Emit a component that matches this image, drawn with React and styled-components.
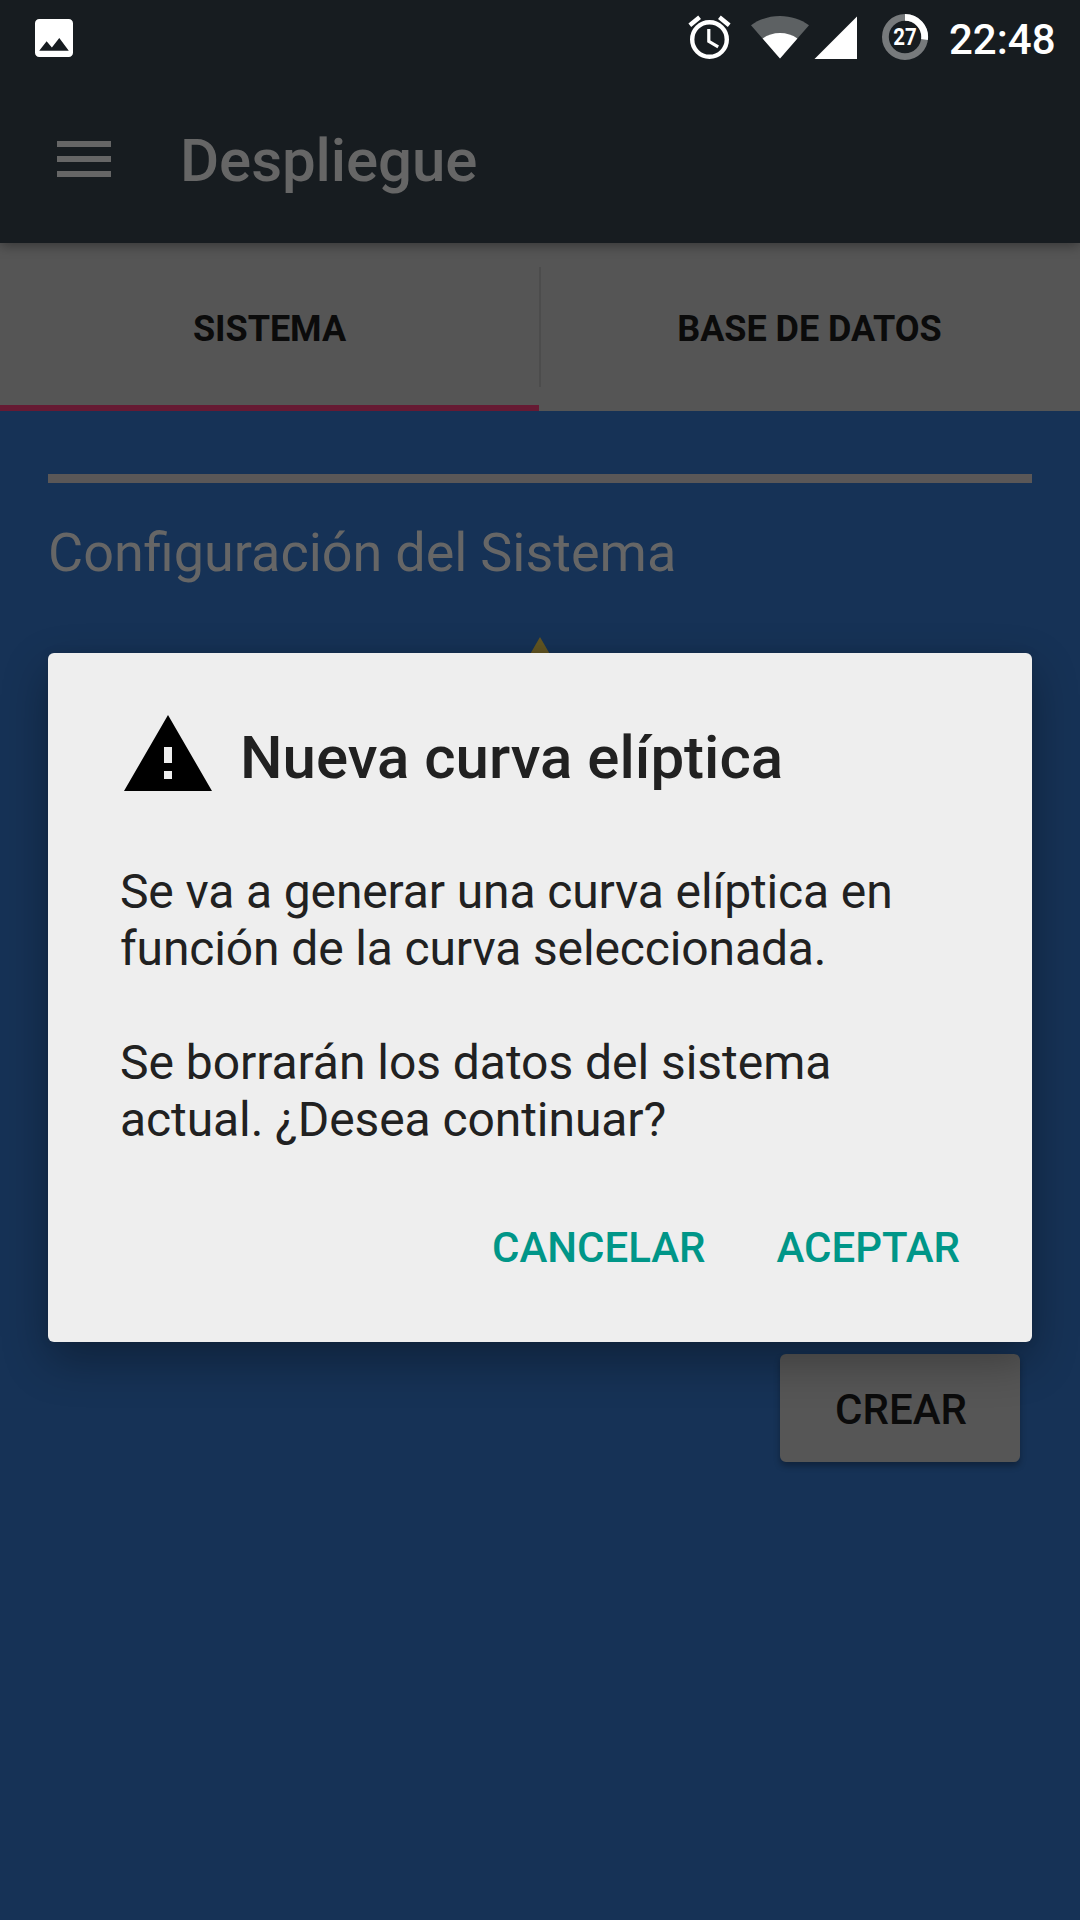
import React from "react";
import styled, { createGlobalStyle } from "styled-components";

const GlobalStyle = createGlobalStyle`
  *, *::before, *::after { box-sizing: border-box; }
  html, body { margin: 0; padding: 0; background: #163256; }
  body { font-family: Roboto, "Noto Sans", sans-serif; }
  button { font-family: inherit; border: 0; margin: 0; padding: 0; background: none; }
  h1, h2, p { margin: 0; }
`;

const Screen = styled.div`
  position: relative;
  display: flex;
  flex-direction: column;
  width: 1080px;
  height: 1920px;
  overflow: hidden;
  background: #163256;
`;

const Header = styled.header`
  position: relative;
  z-index: 1;
  height: 243px;
  background: #171c20;
  box-shadow: 0 3px 11px rgba(0, 0, 0, 0.34);
`;

const StatusBar = styled.div`
  display: flex;
  justify-content: space-between;
  height: 72px;
  padding: 0 24px 0 28px;
  color: #fff;
`;

const StatusGroup = styled.div`
  display: flex;
  align-items: flex-start;
`;

const StatusIcon = styled.svg`
  display: block;
  flex: none;
  width: ${(p) => p.$w}px;
  height: 72px;
  margin-left: ${(p) => p.$gap || 0}px;
`;

const Clock = styled.span`
  width: 107px;
  margin-left: 20px;
  padding-top: 15px;
  font-size: 42px;
  font-weight: 500;
  line-height: 49px;
  white-space: nowrap;
`;

const Toolbar = styled.div`
  display: flex;
  align-items: center;
  height: 171px;
  padding: 0 57px 5px;
  gap: 69px;
  color: #666;
`;

const MenuButton = styled.button`
  display: flex;
  flex-direction: column;
  gap: 9px;
  width: 54px;
  margin-top: 8px;
`;

const MenuLine = styled.span`
  display: block;
  width: 100%;
  height: 6px;
  background: #666;
`;

const Title = styled.h1`
  font-size: 60px;
  font-weight: 500;
  letter-spacing: -0.08px;
  line-height: 70px;
  padding-top: 12px;
`;

const Tabs = styled.nav`
  display: grid;
  grid-template-columns: 539px 2px 539px;
  align-items: stretch;
  height: 168px;
  background: #555;
`;

const Tab = styled.button`
  display: flex;
  align-items: center;
  justify-content: center;
  padding: ${(p) => (p.$active ? "10px 0 0" : "4px 2px 0 0")};
  border-bottom: ${(p) => (p.$active ? "6px solid #661a33" : "0")};
  color: #0b0b0b;
  font-size: 36px;
  font-weight: 700;
  letter-spacing: -0.04px;
  line-height: 42px;
`;

const TabDivider = styled.span`
  height: 120px;
  margin-top: 24px;
  background: #4c4c4c;
`;

const Content = styled.main`
  display: flex;
  flex-direction: column;
  flex: 1;
  padding: 63px 48px 0;
`;

const Rule = styled.div`
  height: 9px;
  background: #5a5757;
`;

const Heading = styled.h2`
  margin-top: 38px;
  color: #666;
  font-size: 54px;
  font-weight: 400;
  word-spacing: -0.6px;
  line-height: 64px;
`;

const Notice = styled.svg`
  display: block;
  align-self: center;
  width: 96px;
  height: 96px;
  margin-top: 44px;
`;

const CreateButton = styled.button`
  align-self: flex-end;
  width: 240px;
  height: 108px;
  margin: 629px 12px 0 0;
  padding: 2px 0 0 2px;
  border-radius: 6px;
  background: #565656;
  box-shadow: 0 4px 6px rgba(0, 0, 0, 0.3);
  color: #0b0b0b;
  font-size: 42px;
  font-weight: 500;
  line-height: 49px;
`;

const Overlay = styled.div`
  position: absolute;
  z-index: 2;
  inset: 72px 0 0;
  display: flex;
  align-items: center;
  padding: 3px 48px 0;
`;

const Dialog = styled.section`
  display: flex;
  flex-direction: column;
  width: 100%;
  height: 689px;
  padding: 54px 72px 0;
  border-radius: 6px;
  background: #eee;
  color: #212121;
  box-shadow: 0 18px 46px rgba(0, 0, 0, 0.32), 0 0 10px rgba(0, 0, 0, 0.1);
`;

const DialogHeader = styled.div`
  display: flex;
  align-items: center;
  gap: 24px;
  height: 96px;
`;

const WarningIcon = styled.svg`
  display: block;
  width: 96px;
  height: 96px;
`;

const DialogTitle = styled.h2`
  font-size: 60px;
  font-weight: 500;
  line-height: 70px;
  padding-top: 5px;
  white-space: nowrap;
`;

const Message = styled.p`
  display: flex;
  flex-direction: column;
  margin-top: ${(p) => p.$top}px;
  font-size: 48px;
  line-height: 57px;
  white-space: nowrap;
`;

const Line = styled.span`
  letter-spacing: ${(p) => p.$track}px;
`;

const Actions = styled.div`
  display: flex;
  justify-content: flex-end;
  gap: 71px;
  margin-top: 75px;
`;

const Action = styled.button`
  color: #009688;
  font-size: 42px;
  font-weight: 500;
  line-height: 49px;
`;

const BatteryText = styled.text`
  font-size: 23px;
  font-weight: 700;
  fill: #fff;
`;

const WARNING = "M1 21h22L12 2 1 21zm12-3h-2v-2h2v2zm0-4h-2v-4h2v4z";

function StatusIcons() {
  return (
    <>
      <StatusIcon $w={46} viewBox="686 0 46 72">
        <circle cx="709.5" cy="39.5" r="17.3" fill="none" stroke="#fff" strokeWidth="4.4" />
        <path d="M708.8 29v12.4l9.4 5.4" fill="none" stroke="#fff" strokeWidth="3.2" />
        <path d="M689.8 25.2l9.8-8M729.2 25.2l-9.8-8" fill="none" stroke="#fff" strokeWidth="4.4" />
      </StatusIcon>
      <StatusIcon $w={60} $gap={18} viewBox="750 0 60 72">
        <path d="M780 58.5L751 25.2C759 19.5 769 16 780 16s21 3.5 29 9.2z" fill="#5d6163" />
        <path d="M780 58.5L762.6 38.4C767.5 35 773.5 33 780 33s12.5 2 17.4 5.4z" fill="#fff" />
      </StatusIcon>
      <StatusIcon $w={44} $gap={4} viewBox="814 0 44 72">
        <path d="M814.5 59H857V16.5z" fill="#fff" />
      </StatusIcon>
      <StatusIcon $w={48} $gap={23} viewBox="881 0 48 72">
        <circle cx="905" cy="37" r="19.6" fill="none" stroke="#777a7c" strokeWidth="6.8" />
        <path d="M905 17.4A19.6 19.6 0 0 1 924.5 39.5" fill="none" stroke="#fff" strokeWidth="6.8" />
        <BatteryText x="905" y="45.2" textAnchor="middle" textLength="23.5" lengthAdjust="spacingAndGlyphs">
          27
        </BatteryText>
      </StatusIcon>
    </>
  );
}

export default function App() {
  return (
    <>
      <GlobalStyle />
      <Screen>
        <Header>
          <StatusBar>
            <StatusGroup>
              <StatusIcon $w={51} viewBox="28 0 51 72">
                <path
                  transform="translate(28.67 12.67) scale(2.111)"
                  fill="#fff"
                  d="M21 19V5c0-1.100-.9-2-2-2H5c-1.100 0-2 .9-2 2v14c0 1.100.9 2 2 2h14c1.100 0 2-.9 2-2zM8.500 13.500l2.500 3.010L14.500 12l4.500 6H5l3.500-4.500z"
                />
              </StatusIcon>
            </StatusGroup>
            <StatusGroup>
              <StatusIcons />
              <Clock>22:48</Clock>
            </StatusGroup>
          </StatusBar>
          <Toolbar>
            <MenuButton aria-label="Menú">
              <MenuLine />
              <MenuLine />
              <MenuLine />
            </MenuButton>
            <Title>Despliegue</Title>
          </Toolbar>
        </Header>
        <Tabs>
          <Tab $active>SISTEMA</Tab>
          <TabDivider />
          <Tab>BASE DE DATOS</Tab>
        </Tabs>
        <Content>
          <Rule />
          <Heading>Configuración del Sistema</Heading>
          <Notice viewBox="0 0 24 24">
            <path fill="#625522" d={WARNING} />
          </Notice>
          <CreateButton>CREAR</CreateButton>
        </Content>
        <Overlay>
          <Dialog>
            <DialogHeader>
              <WarningIcon viewBox="0 0 24 24">
                <path fill="#000" d={WARNING} />
              </WarningIcon>
              <DialogTitle>Nueva curva elíptica</DialogTitle>
            </DialogHeader>
            <Message $top={60}>
              <Line $track={-0.13}>Se va a generar una curva elíptica en</Line>
              <Line $track={-0.13}>función de la curva seleccionada.</Line>
            </Message>
            <Message $top={57}>
              <Line $track={-0.04}>Se borrarán los datos del sistema</Line>
              <Line $track={-0.08}>actual. ¿Desea continuar?</Line>
            </Message>
            <Actions>
              <Action>CANCELAR</Action>
              <Action>ACEPTAR</Action>
            </Actions>
          </Dialog>
        </Overlay>
      </Screen>
    </>
  );
}
